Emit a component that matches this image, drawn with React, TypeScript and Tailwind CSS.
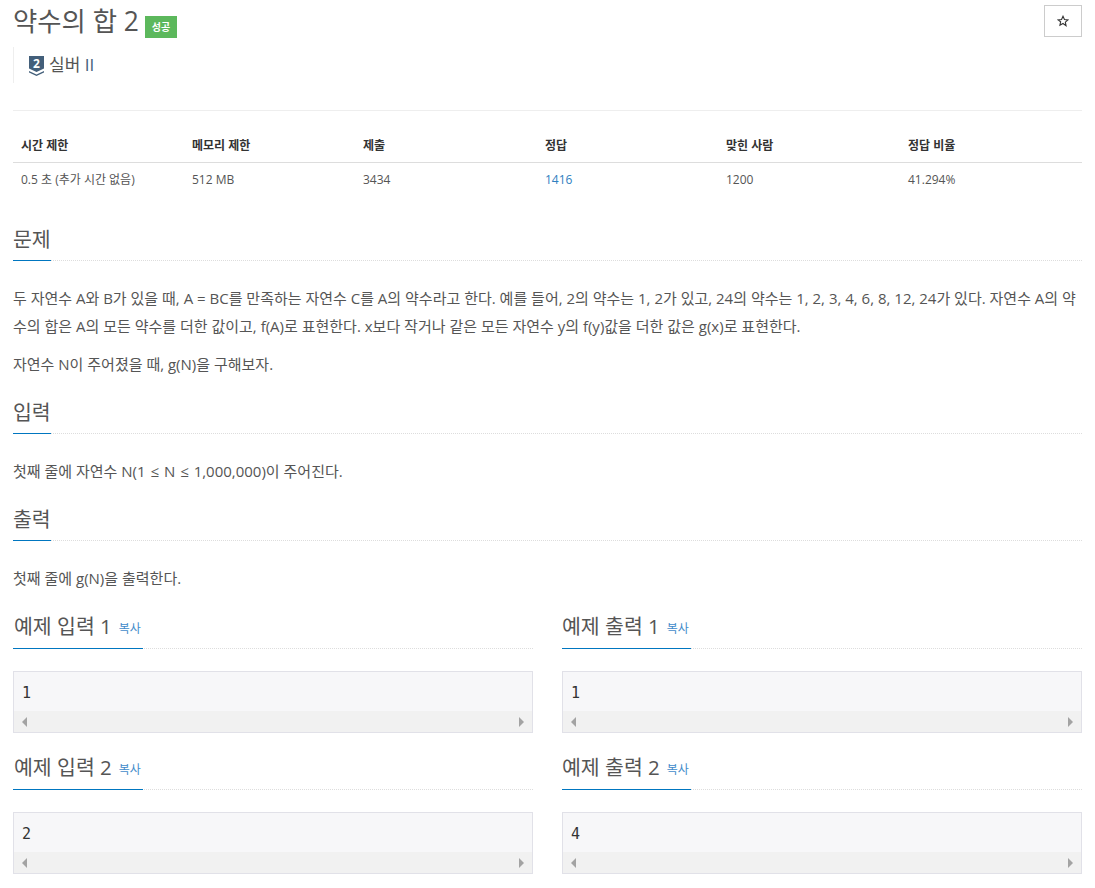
import React from "react";

function Section({ title, children }: { title: string; children: React.ReactNode }) {
  return (
    <section>
      <div className="border-b border-dotted border-[#dddddd] h-[36px]">
        <h2 className="inline-block h-[36px] text-[20.500px] leading-[28px] text-[#555555] border-b border-[#0076c0]">{title}</h2>
      </div>
      {children}
    </section>
  );
}

function Sample({ title, value, right }: { title: string; value: string; right?: boolean }) {
  return (
    <div className="flex-1 min-w-0">
      <div className="border-b border-dotted border-[#dddddd] h-[37px]">
        <div className={`inline-flex items-baseline gap-[7px] h-[37px] pr-[2px] border-b border-[#0076c0] ${right ? "" : "pl-[1px]"}`}>
          <span className="text-[20.500px] leading-[28px] text-[#555555]">{title}</span>
          <span className="text-[12px] text-[#428bca] -translate-y-px">복사</span>
        </div>
      </div>
      <div className="mt-[22px] h-[62px] border border-[#e1e1e8] bg-[#f7f7f9] flex flex-col">
        <pre className="h-[39px] pl-[8px] pt-[11px] text-[15px] leading-[20px] text-[#333333] font-['DejaVu_Sans_Mono',monospace]">{value}</pre>
        <div className="flex-1 bg-[#f1f1f1] flex items-center justify-between px-[8px]">
          <svg width="5" height="10" viewBox="0 0 5 10"><path d="M5 0 L0 5 L5 10 Z" fill="#a3a3a3" /></svg>
          <svg width="5" height="10" viewBox="0 0 5 10"><path d="M0 0 L5 5 L0 10 Z" fill="#a3a3a3" /></svg>
        </div>
      </div>
    </div>
  );
}

const cols = [
  { w: "w-[171px]", h: "시간 제한", v: "0.5 초 (추가 시간 없음)" },
  { w: "w-[171px]", h: "메모리 제한", v: "512 MB" },
  { w: "w-[182px]", h: "제출", v: "3434" },
  { w: "w-[181px]", h: "정답", v: "1416", link: true },
  { w: "w-[182px]", h: "맞힌 사람", v: "1200" },
  { w: "flex-1", h: "정답 비율", v: "41.294%" },
];

export default function App() {
  return (
    <div className="w-[1095px] h-[888px] overflow-hidden bg-white pl-[13px] pr-[13px] text-[15px] text-[#555555] font-['Open_Sans','Noto_Sans_CJK_KR',sans-serif]">
      <div className="flex justify-between items-start h-[111px] border-b border-[#eeeeee]">
        <div>
          <div className="flex items-center h-[47px]">
            <h1 className="w-[124px] whitespace-nowrap text-[26.400px] leading-[30px] text-[#555555] pb-[5px]">약수의 합 2</h1>
            <span className="ml-[8px] mt-[7px] w-[32px] h-[22px] flex items-center justify-center bg-[#5cb85c] text-white text-[10px] font-bold">성공</span>
          </div>
          <div className="border-l border-[#eeeeee] h-[36px] pl-[15px] flex items-center gap-[5px]">
            <svg width="15" height="20" viewBox="0 0 15 20" className="mt-[2px]">
              <path d="M0 0H15V12.5L7.5 16L0 12.5Z" fill="#435f7a" />
              <path d="M0 15L7.5 18.5L15 15V16.5L7.5 20L0 16.5Z" fill="#435f7a" />
              <text x="7.5" y="11.5" textAnchor="middle" fontSize="12" fontWeight="700" fill="#fff" fontFamily="Open Sans">2</text>
            </svg>
            <span className="text-[17px] leading-[22px] text-[#555555]">실버 <span className="text-[#435f7a]">II</span></span>
          </div>
        </div>
        <button className="mt-[5px] w-[38px] h-[32px] border border-[#cccccc] bg-white flex items-center justify-center pr-[1px] pb-[1px]">
          <svg width="12" height="12" viewBox="0 0 24 24" fill="none" stroke="#333" strokeWidth="2.2"><path d="M12 2.500l2.900 6.400 7 .8-5.200 4.700 1.400 6.900L12 16.900 5.900 20.300l1.400-6.900L2.100 9.700l7-.8z" /></svg>
        </button>
      </div>

      <div className="mt-[17px] text-[12px]">
        <div className="flex h-[35px] border-b border-[#dddddd] font-bold text-[#333333]">
          {cols.map((c) => (
            <div key={c.h} className={`${c.w} pl-[8px] pt-[8px] leading-[20px]`}>{c.h}</div>
          ))}
        </div>
        <div className="flex h-[35px] text-[#555555]">
          {cols.map((c) => (
            <div key={c.h} className={`${c.w} pl-[8px] pt-[7px] leading-[20px] ${c.link ? "text-[#2f80c0]" : ""}`}>{c.v}</div>
          ))}
        </div>
      </div>

      <div className="mt-[27px]">
        <Section title="문제">
          <div className="mt-[23px] leading-[28px]">
            <p>두 자연수 A와 B가 있을 때, A = BC를 만족하는 자연수 C를 A의 약수라고 한다. 예를 들어, 2의 약수는 1, 2가 있고, 24의 약수는 1, 2, 3, 4, 6, 8, 12, 24가 있다. 자연수 A의 약수의 합은 A의 모든 약수를 더한 값이고, f(A)로 표현한다. x보다 작거나 같은 모든 자연수 y의 f(y)값을 더한 값은 g(x)로 표현한다.</p>
            <p className="mt-[10px]">자연수 N이 주어졌을 때, g(N)을 구해보자.</p>
          </div>
        </Section>
      </div>

      <div className="mt-[20px]">
        <Section title="입력">
          <p className="mt-[23px] leading-[28px]">첫째 줄에 자연수 N(1 <span className="px-[1px]">≤</span> N <span className="px-[1px]">≤</span> 1,000,000)이 주어진다.</p>
        </Section>
      </div>

      <div className="mt-[20px]">
        <Section title="출력">
          <p className="mt-[23px] leading-[28px]">첫째 줄에 g(N)을 출력한다.</p>
        </Section>
      </div>

      <div className="mt-[20px] flex gap-[29px]">
        <Sample title="예제 입력 1" value="1" />
        <Sample title="예제 출력 1" value="1" right />
      </div>
      <div className="mt-[20px] flex gap-[29px]">
        <Sample title="예제 입력 2" value="2" />
        <Sample title="예제 출력 2" value="4" right />
      </div>
    </div>
  );
}
